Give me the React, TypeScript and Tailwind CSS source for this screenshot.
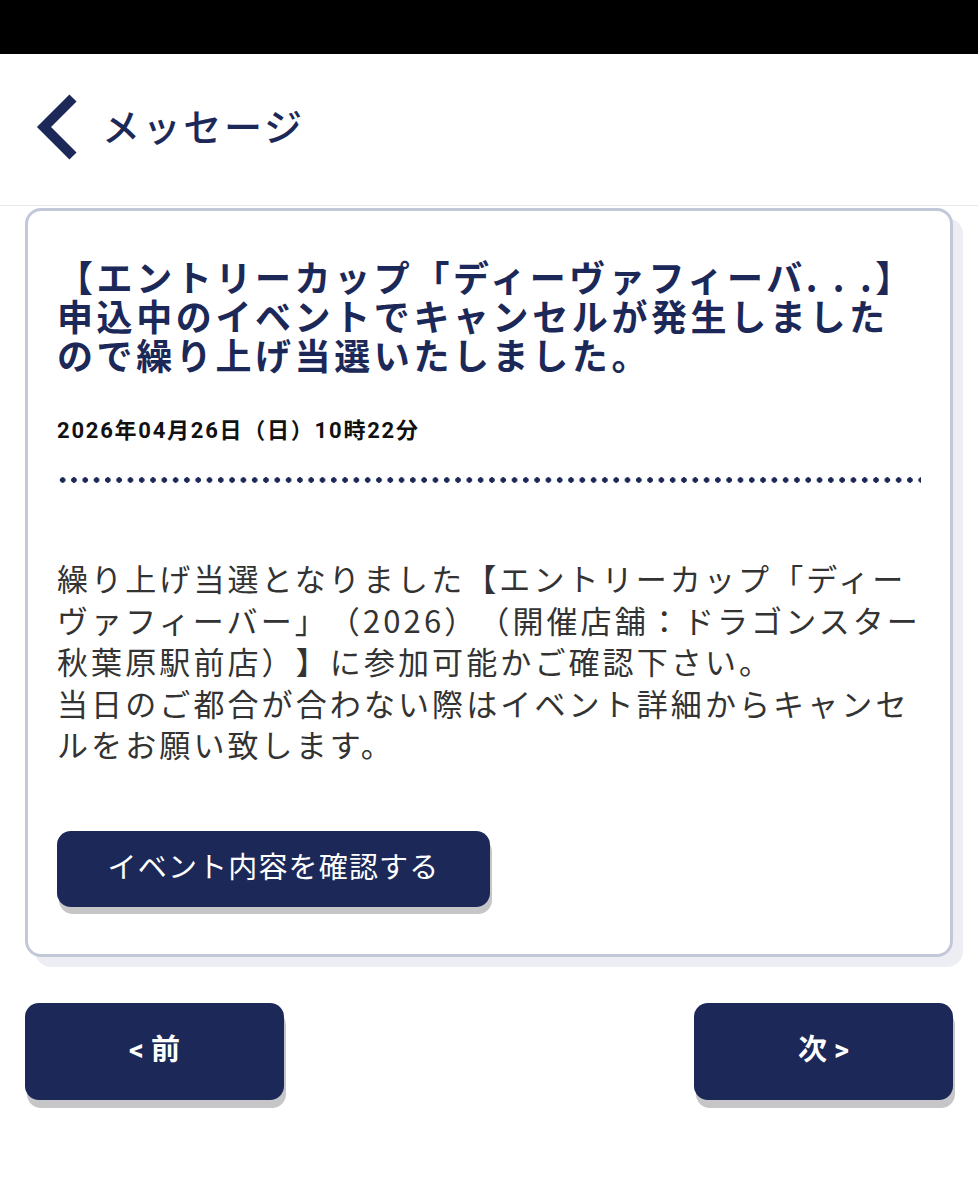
const navy = '#1c2958';

function DotRule() {
  return (
    <div className="h-[6px] w-full bg-[radial-gradient(circle,#1c2958_2.5px,transparent_3px)] bg-[length:11.3px_6px] bg-repeat-x" />
  );
}

export default function App() {
  const font = { fontFamily: '"Roboto", "Noto Sans CJK JP", sans-serif' };
  return (
    <div lang="ja" className="min-h-[1200px] w-[978px] bg-white [text-spacing-trim:space-all]" style={font}>
      <div className="h-[54px] bg-black" />

      <header className="flex h-[152px] items-center border-b border-[#e6e8ec] pl-[36px]">
        <svg width="42" height="66" viewBox="0 0 42 66" className="-mt-[6px]">
          <polyline points="37,4 8,33 37,62" fill="none" stroke={navy} strokeWidth="10" strokeLinejoin="miter" />
        </svg>
        <h1 className="ml-[24px] -mt-[2px] text-[38px] font-medium tracking-[0.07em] text-[#1c2958]">
          メッセージ
        </h1>
      </header>

      <div className="px-[25px] pt-[2px]">
        <div className="rounded-[16px] border-[3px] border-[#c2c8d8] bg-white px-[29px] pt-[46px] pb-[47px] shadow-[10px_10px_0_#eceef3]">
          <h2
            className="whitespace-nowrap text-[36px] font-bold leading-[39px] tracking-[0.1em] text-[#1c2958]"
            style={{ fontFamily: '"Noto Sans CJK JP", sans-serif' }}
          >
            <div>【エントリーカップ「ディーヴァフィーバ. . .】</div>
            <div>申込中のイベントでキャンセルが発生しました</div>
            <div>ので繰り上げ当選いたしました。</div>
          </h2>

          <p className="mt-[40px] text-[22px] font-bold tracking-[0.08em] text-[#111]">
            2026年04月26日（日）10時22分
          </p>

          <div className="mt-[30px]">
            <DotRule />
          </div>

          <div
            className="mt-[74px] whitespace-nowrap text-[31px] leading-[41.5px] tracking-[0.1em] text-[#333]"
            style={{ fontFamily: '"Noto Sans CJK JP", "Roboto", sans-serif' }}
          >
            <div>繰り上げ当選となりました【エントリーカップ「ディー</div>
            <div>ヴァフィーバー」（2026）（開催店舗：ドラゴンスター</div>
            <div>秋葉原駅前店）】に参加可能かご確認下さい。</div>
            <div>当日のご都合が合わない際はイベント詳細からキャンセ</div>
            <div>ルをお願い致します。</div>
          </div>

          <button className="mt-[66px] flex h-[76px] w-[433px] items-center justify-center rounded-[14px] bg-[#1c2958] text-[29px] tracking-[0.04em] text-white shadow-[2px_7px_0_#c6c6c8]">
            イベント内容を確認する
          </button>
        </div>

        <div className="mt-[46px] flex justify-between">
          <button className="flex h-[97px] w-[259px] items-center justify-center rounded-[14px] bg-[#1c2958] text-[29px] font-bold text-white shadow-[2px_8px_0_#c6c6c8]">
            &lt; 前
          </button>
          <button className="flex h-[97px] w-[259px] items-center justify-center rounded-[14px] bg-[#1c2958] text-[29px] font-bold text-white shadow-[2px_8px_0_#c6c6c8]">
            次 &gt;
          </button>
        </div>
      </div>
    </div>
  );
}
